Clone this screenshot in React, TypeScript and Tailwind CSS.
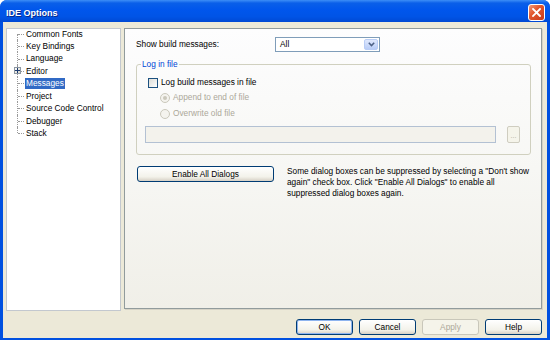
import React from 'react';

const TREE_ITEMS = [
  'Common Fonts',
  'Key Bindings',
  'Language',
  'Editor',
  'Messages',
  'Project',
  'Source Code Control',
  'Debugger',
  'Stack',
];

export default function App() {
  return (
    <div className="flex h-[340px] w-[550px] flex-col overflow-hidden rounded-t-[7px] bg-[#0050e0] font-['Liberation_Sans',Arial,sans-serif] text-[8.3px] leading-none text-black">
      {/* Title bar */}
      <div className="flex h-[22px] items-center bg-[linear-gradient(to_bottom,#3d8ef7_0%,#0a5fe9_14%,#0056ec_45%,#0054e6_75%,#0049d4_100%)] pl-[6px] pr-[5px]">
        <span className="pt-[4px] text-[9px] font-bold text-white [text-shadow:1px_1px_0_#0a2a8a]">IDE Options</span>
        <CloseButton />
      </div>

      {/* Client area */}
      <div className="mx-[3px] mb-[2px] flex flex-1 flex-col bg-[#ece9d8]">
        <div className="mt-[6px] flex gap-[3px] pl-[3px]">
          <Tree />
          <OptionsPage />
        </div>

        <div className="mt-[8px] flex justify-end gap-[6px] pr-[5px]">
          <DlgButton label="OK" isDefault />
          <DlgButton label="Cancel" />
          <DlgButton label="Apply" disabled />
          <DlgButton label="Help" />
        </div>
      </div>
    </div>
  );
}

function CloseButton() {
  return (
    <div className="ml-auto mt-[3px] flex h-[17px] w-[17px] items-center justify-center rounded-[3px] border border-white bg-[linear-gradient(135deg,#f09a7a_0%,#e2582f_40%,#c8391a_100%)]">
      <svg width="9" height="9" viewBox="0 0 9 9">
        <path d="M1 1L8 8M8 1L1 8" stroke="white" strokeWidth="1.8" strokeLinecap="square" />
      </svg>
    </div>
  );
}

function Tree() {
  return (
    <div className="h-[283px] w-[115px] border border-[#c3c8cf] bg-white">
      <div className="-mt-[1.5px]">
        {TREE_ITEMS.map((label, i) => (
          <TreeRow key={label} label={label} first={i === 0} last={i === TREE_ITEMS.length - 1} />
        ))}
      </div>
    </div>
  );
}

function TreeRow({ label, first, last }: { label: string; first: boolean; last: boolean }) {
  const selected = label === 'Messages';
  return (
    <div className="relative flex h-[12.45px] items-center pl-[17.5px]">
      <span
        className={
          'absolute left-[10px] w-0 border-l border-dotted border-[#9a9a9a] ' +
          (first ? 'top-1/2 h-1/2' : last ? 'top-0 h-1/2' : 'top-0 h-full')
        }
      />
      <span className="absolute left-[11px] top-1/2 w-[6px] border-t border-dotted border-[#9a9a9a]" />
      {label === 'Editor' && (
        <span className="absolute left-[7px] top-[2.5px] flex h-[7px] w-[7px] items-center justify-center border border-[#8d97a2] bg-[linear-gradient(135deg,#ffffff,#d7d4c6)]">
          <svg width="5" height="5" viewBox="0 0 5 5">
            <path d="M0 2.5H5M2.5 0V5" stroke="#1c3a70" strokeWidth="1" />
          </svg>
        </span>
      )}
      <span
        className={
          'whitespace-nowrap px-[1.5px] py-[1.5px] ' + (selected ? 'bg-[#316ac5] text-white' : '')
        }
      >
        {label}
      </span>
    </div>
  );
}

function OptionsPage() {
  return (
    <div className="h-[281px] w-[418px] border border-[#919b9c] bg-[linear-gradient(to_bottom,#fdfdfe_0%,#f7f7f4_50%,#f0efe8_100%)] pl-[11px] pr-[10px] pt-[8px] shadow-[1px_1px_0_#d6d3c6]">
      {/* Show build messages */}
      <div className="flex h-[15px] items-center">
        <span className="w-[139px] whitespace-nowrap">Show build messages:</span>
        <ComboBox value="All" />
      </div>

      {/* Log in file group */}
      <fieldset className="mt-[7px] rounded-[3px] border border-[#d0d0bf] px-0 pb-[11px] pt-[8px]">
        <legend className="ml-[4px] h-[10px] px-[1px] leading-[10px] text-[#0046d5]">Log in file</legend>
        <div className="pl-[8px] pr-[10px]">
          <div className="ml-[3px] flex h-[11px] items-center gap-[3px]">
            <span className="h-[10px] w-[10px] border border-[#1c5180] bg-[linear-gradient(135deg,#dcdcd7,#ffffff)]" />
            <span>Log build messages in file</span>
          </div>
          <Radio label="Append to end of file" checked className="mt-[4px]" />
          <Radio label="Overwrite old file" className="mt-[5px]" />
          <div className="mt-[7px] flex gap-[11px]">
            <div className="h-[17px] flex-1 border border-[#b3c1d3] bg-[#f3f2ec]" />
            <div className="flex h-[17px] w-[13px] items-end justify-center rounded-[2px] border border-[#cfcdc0] bg-[#f5f4ea] pb-[3px] text-[7px] text-[#aca899]">
              ...
            </div>
          </div>
        </div>
      </fieldset>

      {/* Enable dialogs */}
      <div className="mt-[11px] flex">
        <div className="ml-[1px]">
          <DlgButton label="Enable All Dialogs" width="w-[137px]" />
        </div>
        <p className="ml-[13px] whitespace-nowrap leading-[11px]">
          Some dialog boxes can be suppressed by selecting a "Don't show
          <br />
          again" check box. Click "Enable All Dialogs" to enable all
          <br />
          suppressed dialog boxes again.
        </p>
      </div>
    </div>
  );
}

function ComboBox({ value }: { value: string }) {
  return (
    <div className="flex h-[15px] w-[105px] items-center border border-[#7f9db9] bg-white p-[1px]">
      <span className="flex-1 pl-[3px]">{value}</span>
      <span className="flex h-full w-[14px] items-center justify-center rounded-[2px] border border-[#b9cdf6] bg-[linear-gradient(to_bottom,#dfe8fd,#b9cdf7)]">
        <svg width="7" height="5" viewBox="0 0 7 5">
          <path d="M0.8 0.8L3.5 3.6L6.2 0.8" stroke="#4d6185" strokeWidth="1.5" fill="none" />
        </svg>
      </span>
    </div>
  );
}

function Radio({ label, checked, className }: { label: string; checked?: boolean; className?: string }) {
  return (
    <div className={'ml-[15px] flex h-[11px] items-center gap-[3px] text-[#aca899] ' + (className ?? '')}>
      <span className="flex h-[10px] w-[10px] items-center justify-center rounded-full border border-[#cac8bb] bg-[#f4f3ee]">
        {checked && <span className="h-[4px] w-[4px] rounded-full bg-[#cac8bb]" />}
      </span>
      <span>{label}</span>
    </div>
  );
}

function DlgButton({
  label,
  isDefault,
  disabled,
  width = 'w-[57px]',
}: {
  label: string;
  isDefault?: boolean;
  disabled?: boolean;
  width?: string;
}) {
  const cls = disabled
    ? 'border-[#c9c7ba] bg-[#f5f4ea] text-[#aca899]'
    : isDefault
      ? 'border-[#003c74] bg-[linear-gradient(to_bottom,#ffffff,#f3f2ea_70%,#d6d0c5)] shadow-[inset_0_0_0_1px_#8eb4ef]'
      : 'border-[#003c74] bg-[linear-gradient(to_bottom,#ffffff,#f3f2ea_70%,#d6d0c5)]';
  return (
    <div className={'flex h-[16px] items-center justify-center rounded-[3px] border ' + width + ' ' + cls}>
      {label}
    </div>
  );
}
